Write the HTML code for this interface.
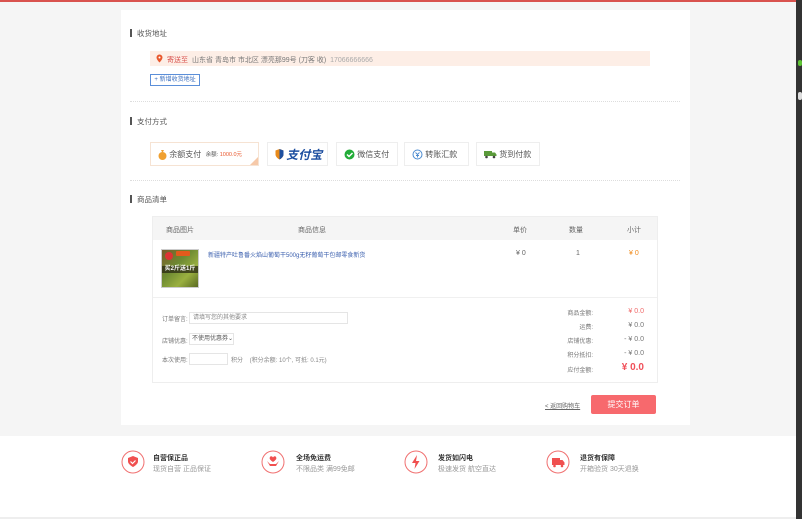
<!DOCTYPE html>
<html><head><meta charset="utf-8">
<style>
*{margin:0;padding:0;box-sizing:border-box}
body{width:802px;height:519px;position:relative;overflow:hidden;background:#f5f5f5;font-family:"Liberation Sans","Noto Sans CJK SC",sans-serif;font-size:7px;color:#666;white-space:nowrap}
.a{position:absolute}
.t{font-size:7.5px;color:#555}
.bar{width:2px;height:8px;background:#555}
.pay{position:absolute;top:142px;height:24px;border:1px solid #eee;background:#fff;display:flex;align-items:center;padding-left:7px;font-size:8px;color:#555}
.dot{border-top:1px dotted #ddd;height:0}
.r{text-align:right}
</style></head><body>
<div class="a" style="left:0;top:0;width:796px;height:1.5px;background:#d9534f"></div>
<div class="a" style="left:796px;top:0;width:6px;height:519px;background:#333"></div>
<div class="a" style="left:798px;top:60px;width:4px;height:6px;background:#5fc535;border-radius:3px"></div>
<div class="a" style="left:798px;top:92px;width:4px;height:8px;background:#ddd;border-radius:3px"></div>

<div class="a" style="left:121px;top:10px;width:569px;height:415px;background:#fff"></div>

<div class="a bar" style="left:130px;top:29px"></div>
<div class="a t" style="left:137px;top:28px">收货地址</div>
<div class="a" style="left:150px;top:51px;width:500px;height:15px;background:#fdeee6"></div>
<svg class="a" style="left:156px;top:54px" width="7" height="9" viewBox="0 0 7 9"><path d="M3.5 0.5a3 3 0 0 1 3 3c0 2-3 5-3 5s-3-3-3-5a3 3 0 0 1 3-3z" fill="#e8572c"/><circle cx="3.5" cy="3.5" r="1" fill="#fff"/></svg>
<div class="a" style="left:167px;top:54.5px;color:#d9534f">寄送至</div>
<div class="a" style="left:192px;top:54.5px;color:#777">山东省 青岛市 市北区 漂亮那99号 (刀客 收) &nbsp;<span style="color:#aaa">17066666666</span></div>
<div class="a" style="left:150px;top:74px;width:50px;height:12px;border:1px solid #5b8fd9;color:#3a6fc0;font-size:6px;line-height:10px;text-align:center">+ 新增收货地址</div>
<div class="a dot" style="left:130px;top:101px;width:550px"></div>

<div class="a bar" style="left:130px;top:117px"></div>
<div class="a t" style="left:137px;top:116px">支付方式</div>
<div class="pay" style="left:150px;width:109px;border-color:#f6e3d3"><svg width="9" height="11" viewBox="0 0 9 11"><path d="M3 1h3l-1 2h-1z" fill="#f0a030"/><circle cx="4.5" cy="7" r="4" fill="#f0a030"/></svg>&nbsp;余额支付&nbsp;&nbsp;<span style="font-size:5.5px">余额: <span style="color:#e8572c">1000.0元</span></span><span style="position:absolute;right:0;bottom:0;width:0;height:0;border-left:8px solid transparent;border-bottom:8px solid #f6c9a9"></span></div>
<div class="pay" style="left:267px;width:61px"><svg width="9" height="11" viewBox="0 0 9 11"><path d="M4.5 0l4 1.5v4c0 3-4 5-4 5s-4-2-4-5v-4z" fill="#e88a1a"/><path d="M4.5 0l4 1.5v4c0 3-4 5-4 5z" fill="#1d4fa0"/></svg>&nbsp;<span style="color:#1d4fa0;font-size:12px;font-weight:bold;font-style:italic">支付宝</span></div>
<div class="pay" style="left:336px;width:62px"><svg width="11" height="11" viewBox="0 0 11 11"><circle cx="5.5" cy="5.5" r="5" fill="#22ac38"/><path d="M3 5.5l2 2 3.5-3.5" stroke="#fff" stroke-width="1.5" fill="none"/></svg>&nbsp;微信支付</div>
<div class="pay" style="left:404px;width:65px"><svg width="11" height="11" viewBox="0 0 11 11"><circle cx="5.5" cy="5.5" r="4.5" fill="none" stroke="#4a8ad0" stroke-width="1"/><path d="M3.5 3.5l2 2 2-2M5.5 5.5v3M4 6.5h3" stroke="#4a8ad0" stroke-width="0.9" fill="none"/></svg>&nbsp;转账汇款</div>
<div class="pay" style="left:476px;width:64px"><svg width="13" height="9" viewBox="0 0 13 9"><rect x="0" y="1" width="8" height="5" fill="#5a9a3a"/><path d="M8 2.5h3l1.5 2v1.5H8z" fill="#5a9a3a"/><circle cx="2.5" cy="7" r="1.3" fill="#444"/><circle cx="10" cy="7" r="1.3" fill="#444"/></svg>&nbsp;货到付款</div>
<div class="a dot" style="left:130px;top:180px;width:550px"></div>

<div class="a bar" style="left:130px;top:195px"></div>
<div class="a t" style="left:137px;top:194px">商品清单</div>
<div class="a" style="left:152px;top:216px;width:506px;height:167px;border:1px solid #eee"></div>
<div class="a" style="left:153px;top:217px;width:504px;height:23px;background:#f5f5f5"></div>
<div class="a" style="left:166px;top:225px">商品图片</div>
<div class="a" style="left:298px;top:225px">商品信息</div>
<div class="a" style="left:513px;top:225px">单价</div>
<div class="a" style="left:569px;top:225px">数量</div>
<div class="a" style="left:627px;top:225px">小计</div>
<div class="a" style="left:161px;top:249px;width:38px;height:39px;background:linear-gradient(135deg,#7a5a2a,#6d8a32 40%,#9ab040 70%,#5a6a22);border:1px solid #ccc"></div>
<div class="a" style="left:165px;top:252px;width:8px;height:8px;border-radius:4px;background:#d33"></div>
<div class="a" style="left:176px;top:251px;width:14px;height:5px;background:#e25a1c;border-radius:1px"></div>
<div class="a" style="left:162px;top:266px;width:36px;height:7px;background:rgba(40,40,20,.75);color:#fff;font-size:6px;font-weight:bold;line-height:7px;text-align:center">买2斤送1斤</div>
<div class="a" style="left:208px;top:250px;color:#3a5fae;font-size:6px">新疆特产吐鲁番火焰山葡萄干500g无籽葡萄干包邮零食新货</div>
<div class="a" style="left:516px;top:250px;color:#666">¥ 0</div>
<div class="a" style="left:576px;top:250px">1</div>
<div class="a" style="left:629px;top:250px;color:#f08a1a">¥ 0</div>
<div class="a" style="left:153px;top:297px;width:504px;border-top:1px solid #f0f0f0"></div>

<div class="a" style="left:162px;top:314px;color:#777;font-size:6px">订单留言:</div>
<div class="a" style="left:189px;top:312px;width:159px;height:12px;border:1px solid #e5e5e5;color:#888;padding-left:3px;line-height:10px;font-size:6px">请填写您的其他要求</div>
<div class="a" style="left:162px;top:336px;color:#777;font-size:6px">店铺优惠:</div>
<div class="a" style="left:189px;top:333px;width:45px;height:12px;border:1px solid #e5e5e5;color:#555;padding-left:2px;line-height:10px;font-size:6px;overflow:hidden">不使用优惠券⌄</div>
<div class="a" style="left:162px;top:355px;color:#777;font-size:6px">本次使用:</div>
<div class="a" style="left:189px;top:353px;width:39px;height:12px;border:1px solid #e5e5e5"></div>
<div class="a" style="left:231px;top:355px;color:#888;font-size:6px">积分 &nbsp;&nbsp;&nbsp;(积分余额: 10个, 可抵: 0.1元)</div>

<div class="a r" style="left:540px;top:308px;width:53px;color:#777;font-size:6px">商品金额:</div>
<div class="a r" style="left:540px;top:322px;width:53px;color:#777;font-size:6px">运费:</div>
<div class="a r" style="left:540px;top:336px;width:53px;color:#777;font-size:6px">店铺优惠:</div>
<div class="a r" style="left:540px;top:350px;width:53px;color:#777;font-size:6px">积分抵扣:</div>
<div class="a r" style="left:540px;top:365px;width:53px;color:#777;font-size:6px">应付金额:</div>
<div class="a r" style="left:600px;top:308px;width:44px;color:#f06a6a">¥ 0.0</div>
<div class="a r" style="left:600px;top:322px;width:44px;color:#777">¥ 0.0</div>
<div class="a r" style="left:600px;top:336px;width:44px;color:#777">- ¥ 0.0</div>
<div class="a r" style="left:600px;top:350px;width:44px;color:#777">- ¥ 0.0</div>
<div class="a r" style="left:590px;top:362px;width:54px;color:#f0505a;font-size:10px;font-weight:bold">¥ 0.0</div>

<div class="a" style="left:545px;top:401px;color:#666;text-decoration:underline;font-size:6px">&lt; 返回购物车</div>
<div class="a" style="left:591px;top:395px;width:65px;height:19px;background:#f7696d;border-radius:2px;color:#fff;font-size:8px;line-height:19px;text-align:center">提交订单</div>

<div class="a" style="left:0;top:436px;width:796px;height:81px;background:#fff"></div>
<div class="a" style="left:0;top:517px;width:796px;height:2px;background:#eee"></div>

<svg class="a" style="left:121px;top:450px" width="24" height="24" viewBox="0 0 24 24"><circle cx="12" cy="12" r="11" fill="none" stroke="#f07070" stroke-width="1"/><path d="M12 6l5 2v3.5c0 3-5 5.5-5 5.5s-5-2.5-5-5.5V8z" fill="#f05050"/><path d="M9.5 11.5l2 2 3-3" stroke="#fff" stroke-width="1.2" fill="none"/></svg>
<div class="a" style="left:153px;top:453px;color:#333;font-weight:bold">自营保正品</div>
<div class="a" style="left:153px;top:464px;color:#999">现货自营 正品保证</div>

<svg class="a" style="left:261px;top:450px" width="24" height="24" viewBox="0 0 24 24"><circle cx="12" cy="12" r="11" fill="none" stroke="#f07070" stroke-width="1"/><path d="M12 12c-3-2-4-3.5-3-5s2.5-.5 3 .5c.5-1 2-2 3-.5s0 3-3 5z" fill="#f05050"/><path d="M6 11l3 5h6l3-5-3 3h-6z" fill="#f05050"/></svg>
<div class="a" style="left:296px;top:453px;color:#333;font-weight:bold">全场免运费</div>
<div class="a" style="left:296px;top:464px;color:#999">不限品类 满99免邮</div>

<svg class="a" style="left:404px;top:450px" width="24" height="24" viewBox="0 0 24 24"><circle cx="12" cy="12" r="11" fill="none" stroke="#f07070" stroke-width="1"/><path d="M13 5l-5 8h3.5l-1 6 5-8h-3.5z" fill="#f05050"/></svg>
<div class="a" style="left:438px;top:453px;color:#333;font-weight:bold">发货如闪电</div>
<div class="a" style="left:438px;top:464px;color:#999">极速发货 航空直达</div>

<svg class="a" style="left:546px;top:450px" width="24" height="24" viewBox="0 0 24 24"><circle cx="12" cy="12" r="11" fill="none" stroke="#f07070" stroke-width="1"/><rect x="6" y="8" width="8" height="7" fill="#f05050"/><path d="M14 10h2.5l2 2.5V15H14z" fill="#f05050"/><circle cx="8.5" cy="16" r="1.3" fill="#f05050"/><circle cx="16" cy="16" r="1.3" fill="#f05050"/></svg>
<div class="a" style="left:580px;top:453px;color:#333;font-weight:bold">退货有保障</div>
<div class="a" style="left:580px;top:464px;color:#999">开箱验货 30天退换</div>
</body></html>
